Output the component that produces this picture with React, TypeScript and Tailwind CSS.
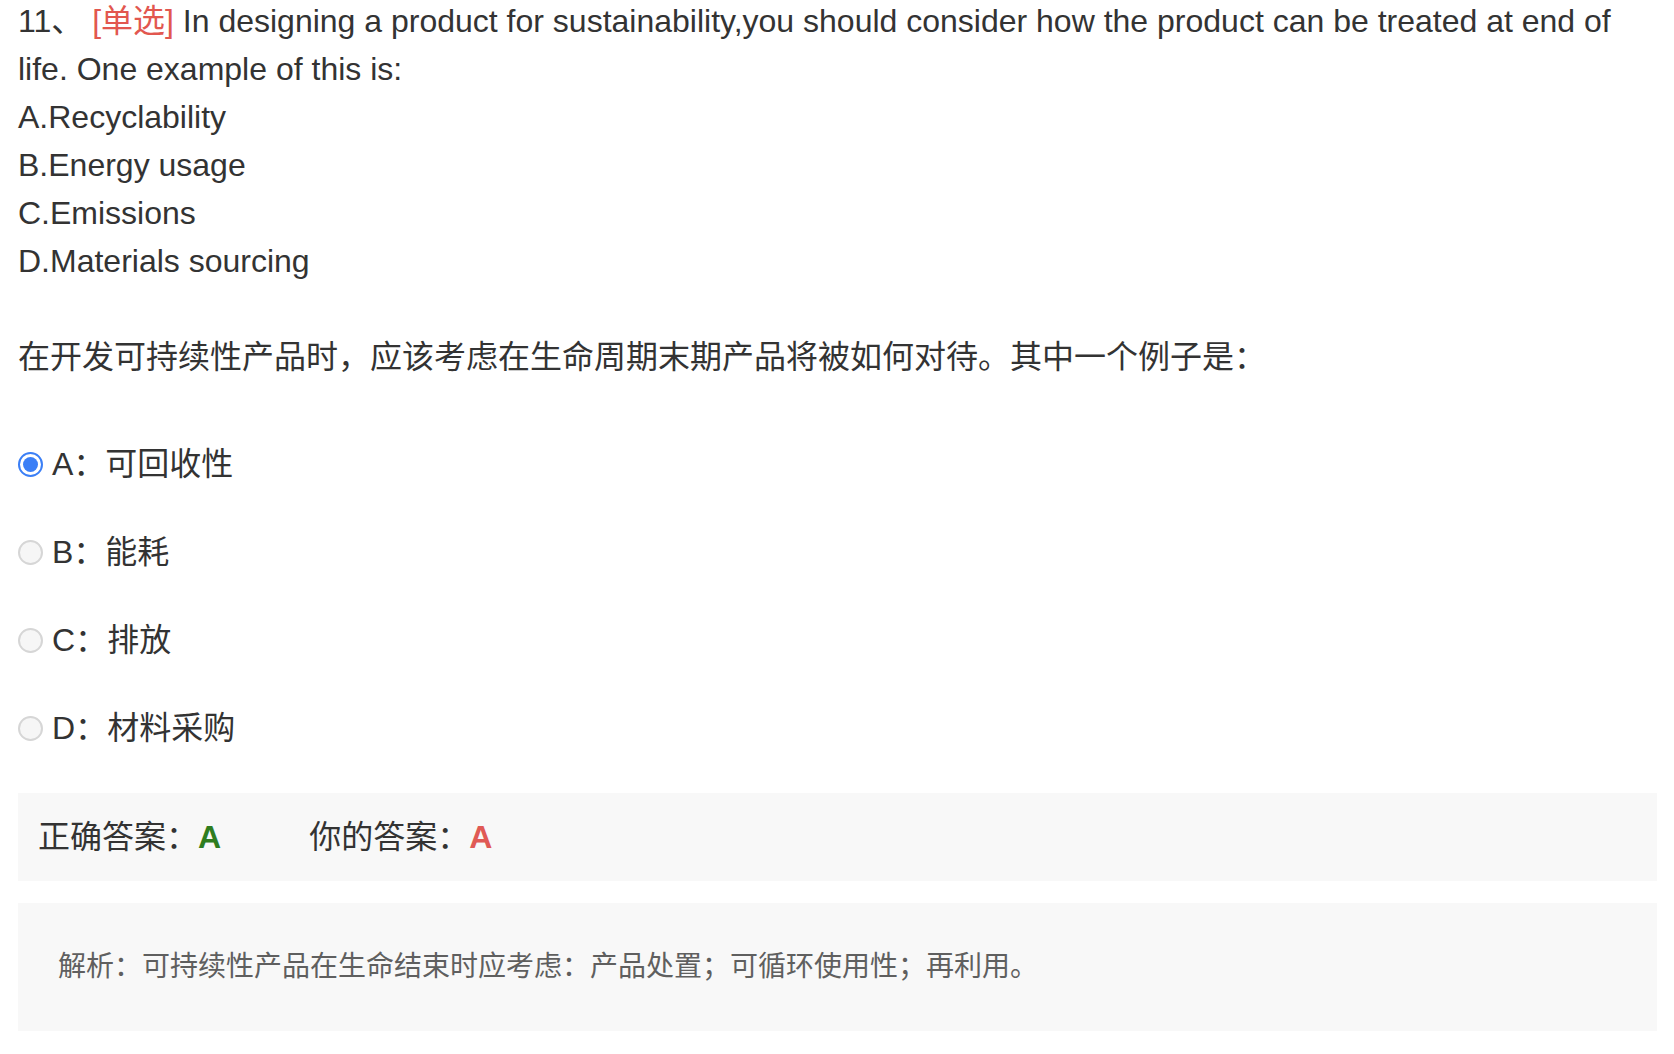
import React from "react";

const options = [
  { key: "A", text: "可回收性", checked: true },
  { key: "B", text: "能耗", checked: false },
  { key: "C", text: "排放", checked: false },
  { key: "D", text: "材料采购", checked: false },
];

function Radio({ checked }: { checked: boolean }) {
  if (checked) {
    return (
      <span className="flex h-[25px] w-[25px] shrink-0 items-center justify-center rounded-full border-2 border-[#3b7ff6] bg-white">
        <span className="h-[15px] w-[15px] rounded-full bg-[#3b7ff6]" />
      </span>
    );
  }
  return (
    <span className="h-[25px] w-[25px] shrink-0 rounded-full border-2 border-[#d6d6d6] bg-[#f6f6f6]" />
  );
}

export default function App() {
  return (
    <div
      className="h-[1054px] w-full overflow-hidden bg-white pl-[18px] pr-[17px] text-[32px] leading-[48px] text-[#333333]"
      style={{ fontFamily: '"Liberation Sans", "Noto Sans CJK SC", sans-serif' }}
    >
      <div className="mt-[-3px]">
        <div>
          11、 <span className="text-[#e2574f]">[单选]</span> In designing a product for sustainability,you should
          consider how the product can be treated at end of life. One example of this is:
        </div>
        <div>A.Recyclability</div>
        <div>B.Energy usage</div>
        <div>C.Emissions</div>
        <div>D.Materials sourcing</div>
      </div>

      <div className="mt-[48px] flex h-[48px] items-center">
        在开发可持续性产品时，应该考虑在生命周期末期产品将被如何对待。其中一个例子是：
      </div>

      <div className="mt-[59px] flex flex-col gap-[40px]">
        {options.map((o) => (
          <label key={o.key} className="flex h-[48px] items-center">
            <Radio checked={o.checked} />
            <span className="ml-[9px]">
              {o.key}：{o.text}
            </span>
          </label>
        ))}
      </div>

      <div className="mt-[41px] flex h-[88px] items-center bg-[#f8f8f8] pl-[20px]">
        <span>正确答案：</span>
        <span className="font-bold text-[#2f7d1f]">A</span>
        <span className="ml-[88px]">你的答案：</span>
        <span className="font-bold text-[#e05a55]">A</span>
      </div>

      <div className="mt-[22px] flex h-[128px] items-center bg-[#f8f8f8] pl-[40px] text-[28px] text-[#5f5f5f]">
        解析：可持续性产品在生命结束时应考虑：产品处置；可循环使用性；再利用。
      </div>
    </div>
  );
}
